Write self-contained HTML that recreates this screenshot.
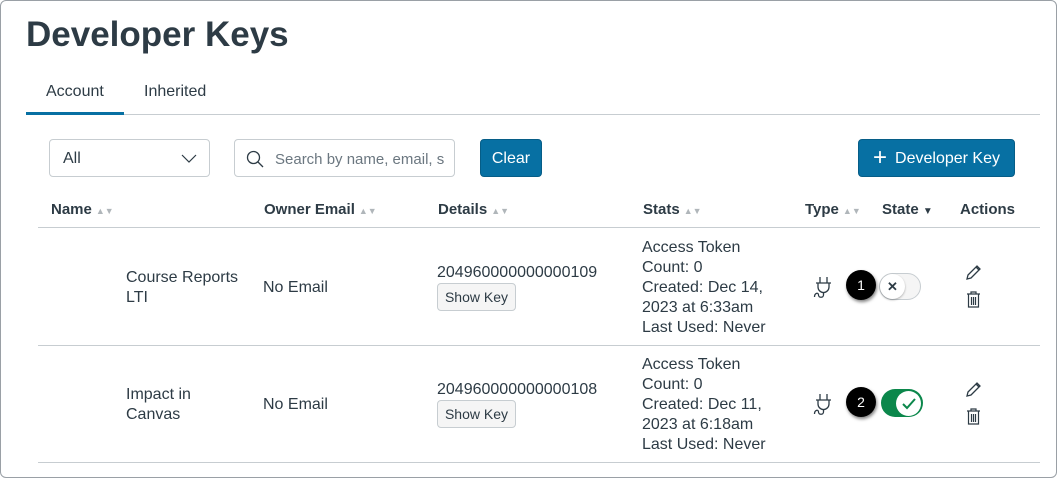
<!DOCTYPE html>
<html><head><style>
*{box-sizing:border-box;margin:0;padding:0}
body{width:1057px;height:478px;background:#fff;font-family:"Liberation Sans",sans-serif;color:#2d3b45;position:relative;overflow:hidden}
.frame{position:absolute;left:0;top:0;width:1057px;height:478px;border:1px solid #9aa0a6;border-radius:6px}
.a{position:absolute;white-space:nowrap}
.t{font-size:16px}
.h{font-size:15px;font-weight:bold}
.sort{color:#b0b6ba;font-size:9px;margin-left:4px}
.line{position:absolute;height:1px;background:#c7cdd1}
.btn{position:absolute;border-radius:4px;font-size:16px;display:flex;align-items:center;justify-content:center}
.badge{position:absolute;width:30px;height:30px;border-radius:50%;background:#000;color:#fff;font-size:14px;display:flex;align-items:center;justify-content:center;box-shadow:1px 2px 3px rgba(0,0,0,.5)}
.sk{position:absolute;width:79px;height:28px;border:1px solid #c7cdd1;background:#f5f5f5;border-radius:4px;font-size:14px;display:flex;align-items:center;justify-content:center}
</style></head><body>
<div class="frame"></div>
<div class="a" style="left:26px;top:15px;font-size:35px;font-weight:bold">Developer Keys</div>
<div class="a t" style="left:46px;top:83px">Account</div>
<div class="a t" style="left:144px;top:83px">Inherited</div>
<div class="line" style="left:26px;top:114px;width:1014px"></div>
<div style="position:absolute;left:26px;top:112px;width:98px;height:3px;background:#0770a3"></div>

<div class="btn" style="left:49px;top:139px;width:161px;height:38px;border:1px solid #c7cdd1;justify-content:flex-start;padding-left:13px;padding-top:2px">All
<svg style="position:absolute;right:12px;top:14px" width="16" height="10" viewBox="0 0 16 10"><path d="M1 1l7 7 7-7" fill="none" stroke="#2d3b45" stroke-width="1.2"/></svg></div>
<div class="btn" style="left:234px;top:139px;width:221px;height:38px;border:1px solid #c7cdd1;justify-content:flex-start;padding-left:40px;padding-top:2px;color:#6b7780;overflow:hidden;font-size:15px">Search by name, email, s
<svg style="position:absolute;left:11px;top:10px" width="18" height="18" viewBox="0 0 18 18"><circle cx="7.5" cy="7.5" r="6" fill="none" stroke="#2d3b45" stroke-width="1.3"/><path d="M12 12l5 5" stroke="#2d3b45" stroke-width="1.3"/></svg></div>
<div class="btn" style="left:480px;top:139px;width:62px;height:38px;background:#0770a3;color:#fff;border:1px solid #065d87;padding-top:2px">Clear</div>
<div class="btn" style="left:858px;top:139px;width:157px;height:38px;background:#0770a3;color:#fff;border:1px solid #065d87;padding-top:2px"><span style="font-size:24px;font-weight:300;margin-right:8px;line-height:1;margin-top:-3px">+</span>Developer Key</div>

<div class="a h" style="left:51px;top:201px">Name<span class="sort">▲▼</span></div>
<div class="a h" style="left:264px;top:201px">Owner Email<span class="sort">▲▼</span></div>
<div class="a h" style="left:438px;top:201px">Details<span class="sort">▲▼</span></div>
<div class="a h" style="left:643px;top:201px">Stats<span class="sort">▲▼</span></div>
<div class="a h" style="left:805px;top:201px">Type<span class="sort">▲▼</span></div>
<div class="a h" style="left:882px;top:201px">State <span style="font-size:10px">▼</span></div>
<div class="a h" style="left:960px;top:201px">Actions</div>
<div class="line" style="left:38px;top:227px;width:1002px"></div>

<div class="a t" style="left:126px;top:268px;line-height:20px">Course Reports<br>LTI</div>
<div class="a t" style="left:263px;top:279px">No Email</div>
<div class="a t" style="left:437px;top:264px">204960000000000109</div>
<div class="sk" style="left:437px;top:283px">Show Key</div>
<div class="a t" style="left:642px;top:238px;line-height:20px">Access Token<br>Count: 0<br>Created: Dec 14,<br>2023 at 6:33am<br>Last Used: Never</div>
<svg class="a" style="left:813px;top:276px" width="20" height="26" viewBox="0 0 20 26"><path d="M7 1v6M14 1v6M3 7h15M5 7v4a5 5 0 0 0 11 0V7M10.5 16v3c0 3-5 3-5 0s-4-2-4 2" fill="none" stroke="#2d3b45" stroke-width="1.3"/></svg>
<div class="badge" style="left:846px;top:270px">1</div>
<div style="position:absolute;left:879px;top:273px;width:42px;height:27px;border-radius:14px;background:#f5f5f5;border:1px solid #c7cdd1"></div>
<div style="position:absolute;left:880px;top:274px;width:25px;height:25px;border-radius:50%;background:#fff;box-shadow:0 1px 2px rgba(0,0,0,.3);display:flex;align-items:center;justify-content:center;font-size:13px;font-weight:bold">✕</div>
<svg class="a" style="left:965px;top:263px" width="18" height="18" viewBox="0 0 18 18"><path d="M2 16l1-4 9-9 3 3-9 9zM11 4l3 3" fill="none" stroke="#2d3b45" stroke-width="1.3"/></svg>
<svg class="a" style="left:966px;top:291px" width="15" height="17" viewBox="0 0 15 17"><path d="M1 3h13M5 3V1h5v2M2.5 3v13h10V3M5.5 6v8M7.5 6v8M9.5 6v8" fill="none" stroke="#2d3b45" stroke-width="1.2"/></svg>
<div class="line" style="left:38px;top:345px;width:1002px"></div>

<div class="a t" style="left:126px;top:385px;line-height:20px">Impact in<br>Canvas</div>
<div class="a t" style="left:263px;top:396px">No Email</div>
<div class="a t" style="left:437px;top:381px">204960000000000108</div>
<div class="sk" style="left:437px;top:400px">Show Key</div>
<div class="a t" style="left:642px;top:355px;line-height:20px">Access Token<br>Count: 0<br>Created: Dec 11,<br>2023 at 6:18am<br>Last Used: Never</div>
<svg class="a" style="left:813px;top:393px" width="20" height="26" viewBox="0 0 20 26"><path d="M7 1v6M14 1v6M3 7h15M5 7v4a5 5 0 0 0 11 0V7M10.5 16v3c0 3-5 3-5 0s-4-2-4 2" fill="none" stroke="#2d3b45" stroke-width="1.3"/></svg>
<div class="badge" style="left:846px;top:387px">2</div>
<div style="position:absolute;left:881px;top:389px;width:42px;height:28px;border-radius:14px;background:#0b874b"></div>
<div style="position:absolute;left:896px;top:391px;width:25px;height:25px;border-radius:50%;background:#fff;display:flex;align-items:center;justify-content:center">
<svg width="14" height="12" viewBox="0 0 14 12"><path d="M1 6l4 4 8-9" fill="none" stroke="#0b874b" stroke-width="2"/></svg></div>
<svg class="a" style="left:965px;top:380px" width="18" height="18" viewBox="0 0 18 18"><path d="M2 16l1-4 9-9 3 3-9 9zM11 4l3 3" fill="none" stroke="#2d3b45" stroke-width="1.3"/></svg>
<svg class="a" style="left:966px;top:408px" width="15" height="17" viewBox="0 0 15 17"><path d="M1 3h13M5 3V1h5v2M2.5 3v13h10V3M5.5 6v8M7.5 6v8M9.5 6v8" fill="none" stroke="#2d3b45" stroke-width="1.2"/></svg>
<div class="line" style="left:38px;top:462px;width:1002px"></div>
</body></html>
